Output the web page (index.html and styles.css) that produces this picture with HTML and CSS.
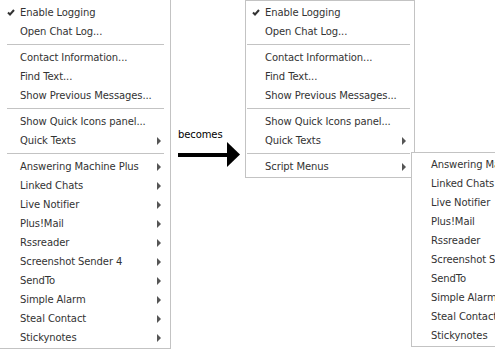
FILE: index.html
```html
<!DOCTYPE html>
<html lang="en">
<head>
  <meta charset="UTF-8">
  <title>Script Menus</title>
  <link rel="stylesheet" href="styles.css">
</head>
<body>
  <div class="stage">
    <ul class="menu menu-old">
      <li class="item"><span class="check"><svg width="8" height="7" viewBox="0 0 8 7"><path d="M1 3.5 L3 5.5 L7 1" fill="none" stroke="#333" stroke-width="2"/></svg></span>Enable Logging</li>
      <li class="item">Open Chat Log...</li>
      <li class="sep"></li>
      <li class="item">Contact Information...</li>
      <li class="item">Find Text...</li>
      <li class="item">Show Previous Messages...</li>
      <li class="sep"></li>
      <li class="item">Show Quick Icons panel...</li>
      <li class="item sub">Quick Texts<span class="arrow"></span></li>
      <li class="sep"></li>
      <li class="item sub">Answering Machine Plus<span class="arrow"></span></li>
      <li class="item sub">Linked Chats<span class="arrow"></span></li>
      <li class="item sub">Live Notifier<span class="arrow"></span></li>
      <li class="item sub">Plus!Mail<span class="arrow"></span></li>
      <li class="item sub">Rssreader<span class="arrow"></span></li>
      <li class="item sub">Screenshot Sender 4<span class="arrow"></span></li>
      <li class="item sub">SendTo<span class="arrow"></span></li>
      <li class="item sub">Simple Alarm<span class="arrow"></span></li>
      <li class="item sub">Steal Contact<span class="arrow"></span></li>
      <li class="item sub">Stickynotes<span class="arrow"></span></li>
    </ul>

    <div class="becomes">
      <span class="becomes-label">becomes</span>
      <svg width="62" height="25" viewBox="0 0 62 25">
        <rect x="0" y="11" width="50" height="4" fill="#000"/>
        <path d="M49 0 L62 12.5 L49 25 Z" fill="#000"/>
      </svg>
    </div>

    <div class="menu-wrap">
      <ul class="menu menu-new">
        <li class="item"><span class="check"><svg width="8" height="7" viewBox="0 0 8 7"><path d="M1 3.5 L3 5.5 L7 1" fill="none" stroke="#333" stroke-width="2"/></svg></span>Enable Logging</li>
        <li class="item">Open Chat Log...</li>
        <li class="sep"></li>
        <li class="item">Contact Information...</li>
        <li class="item">Find Text...</li>
        <li class="item">Show Previous Messages...</li>
        <li class="sep"></li>
        <li class="item">Show Quick Icons panel...</li>
        <li class="item sub">Quick Texts<span class="arrow"></span></li>
        <li class="sep"></li>
        <li class="item sub">Script Menus<span class="arrow"></span></li>
      </ul>

      <!-- submenu opened from "Script Menus" -->
      <ul class="menu submenu">
        <li class="item">Answering Machine Plus</li>
        <li class="item">Linked Chats</li>
        <li class="item">Live Notifier</li>
        <li class="item">Plus!Mail</li>
        <li class="item">Rssreader</li>
        <li class="item">Screenshot Sender 4</li>
        <li class="item">SendTo</li>
        <li class="item">Simple Alarm</li>
        <li class="item">Steal Contact</li>
        <li class="item">Stickynotes</li>
      </ul>
    </div>
  </div>
</body>
</html>
```

FILE: styles.css
```css
body {
  margin: 0;
  background: #fff;
  font-family: 'DejaVu Sans', Tahoma, sans-serif;
  font-size: 10px;
  letter-spacing: -0.1px;
  color: #333;
  overflow: hidden;
}

.stage {
  display: flex;
  align-items: flex-start;
}

.menu {
  list-style: none;
  margin: 0;
  background: #fff;
  border: 1px solid #c3c3c3;
}

.item {
  display: flex;
  align-items: center;
  justify-content: space-between;
  height: 19px;
  line-height: 19px;
  padding-left: 20px;
  white-space: nowrap;
}

.item .check {
  display: inline-flex;
  width: 13px;
  margin-left: -13px;
}

.item:first-child {
  justify-content: flex-start;
}

.arrow {
  width: 0;
  height: 0;
  border-left: 4px solid #555;
  border-top: 4px solid transparent;
  border-bottom: 4px solid transparent;
}

.sep {
  height: 1px;
  background: #c3c3c3;
}

/* menu before */
.menu-old {
  width: 170px;
  padding: 3px 0 1px;
  border-top: none;
  border-left: none;
}

.menu-old .item {
  padding-right: 9px;
}

.menu-old .sep {
  margin: 3px 6px 3px 7px;
}

/* arrow between both */
.becomes {
  display: flex;
  flex-direction: column;
  width: 67px;
  padding: 128px 0 0 7px;
}

.becomes-label {
  color: #000;
  line-height: 13px;
  margin-bottom: 1px;
}

/* menu after */
.menu-wrap {
  position: relative;
}

.menu-new {
  width: 168px;
  padding: 2px 0 1px;
}

.menu-new .item {
  padding-left: 19px;
  padding-right: 8px;
}

.menu-new .sep {
  margin: 3px 4px 3px 1px;
}

.submenu {
  position: absolute;
  left: 166px;
  top: 152px;
  width: 120px;
  padding: 2px 0 1px;
}

.submenu .item {
  padding-left: 19px;
}
```
